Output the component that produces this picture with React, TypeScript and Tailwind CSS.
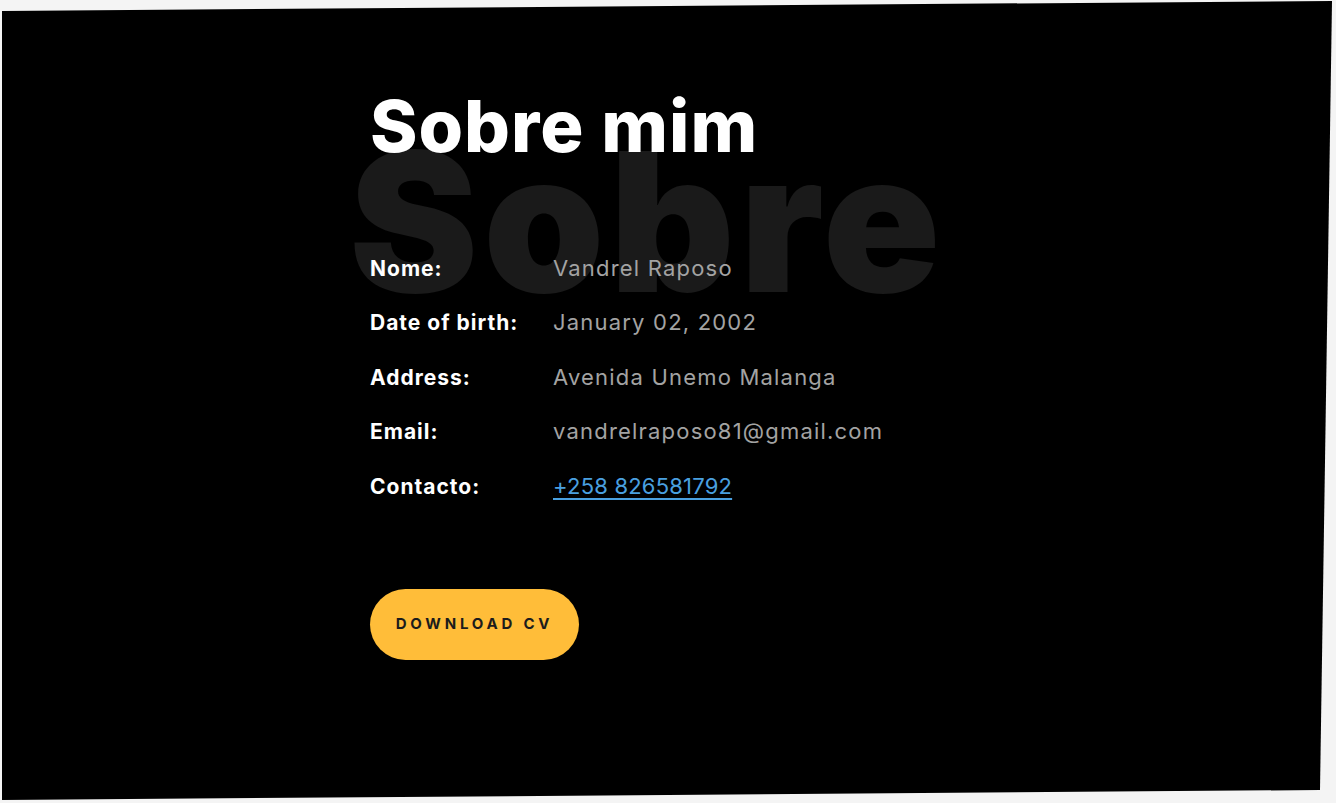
const info = [
  { label: "Nome:", value: "Vandrel Raposo" },
  { label: "Date of birth:", value: "January 02, 2002" },
  { label: "Address:", value: "Avenida Unemo Malanga" },
  { label: "Email:", value: "vandrelraposo81@gmail.com" },
];

export default function App() {
  return (
    <div className="h-[803px] w-full bg-[#f4f4f4] overflow-hidden font-['Inter',sans-serif]">
      <section className="h-[803px] w-full bg-black text-white [clip-path:polygon(2px_11px,1332px_1px,1320px_790px,2px_800px)]">
        <div className="ml-[370px] pt-[90px] w-[700px]">
          <div className="relative h-[151px]">
            <span className="absolute left-[-21px] top-[35px] text-[194px] font-black leading-none tracking-[5px] text-[#1a1a1a] select-none">
              Sobre
            </span>
            <h1 className="relative text-[72px] font-extrabold leading-none tracking-[1px]">
              Sobre mim
            </h1>
          </div>
          <div className="relative flex flex-col">
            {info.map((item) => (
              <div key={item.label} className="flex h-[54.5px] items-center">
                <span className="w-[183px] shrink-0 text-[21px] font-bold tracking-[1px]">{item.label}</span>
                <span className="text-[22px] tracking-[1.2px] text-[#a3a3a3]">{item.value}</span>
              </div>
            ))}
            <div className="flex h-[54.5px] items-center">
              <span className="w-[183px] shrink-0 text-[21px] font-bold tracking-[1px]">Contacto:</span>
              <a href="#" className="text-[22px] tracking-[0.2px] text-[#4aa0e0] underline underline-offset-4">
                +258 826581792
              </a>
            </div>
          </div>
          <button className="mt-[75px] h-[71px] w-[209px] rounded-full bg-[#ffbd39] text-[15px] font-bold tracking-[3.8px] text-[#1c1c1c]">
            DOWNLOAD CV
          </button>
        </div>
      </section>
    </div>
  );
}
